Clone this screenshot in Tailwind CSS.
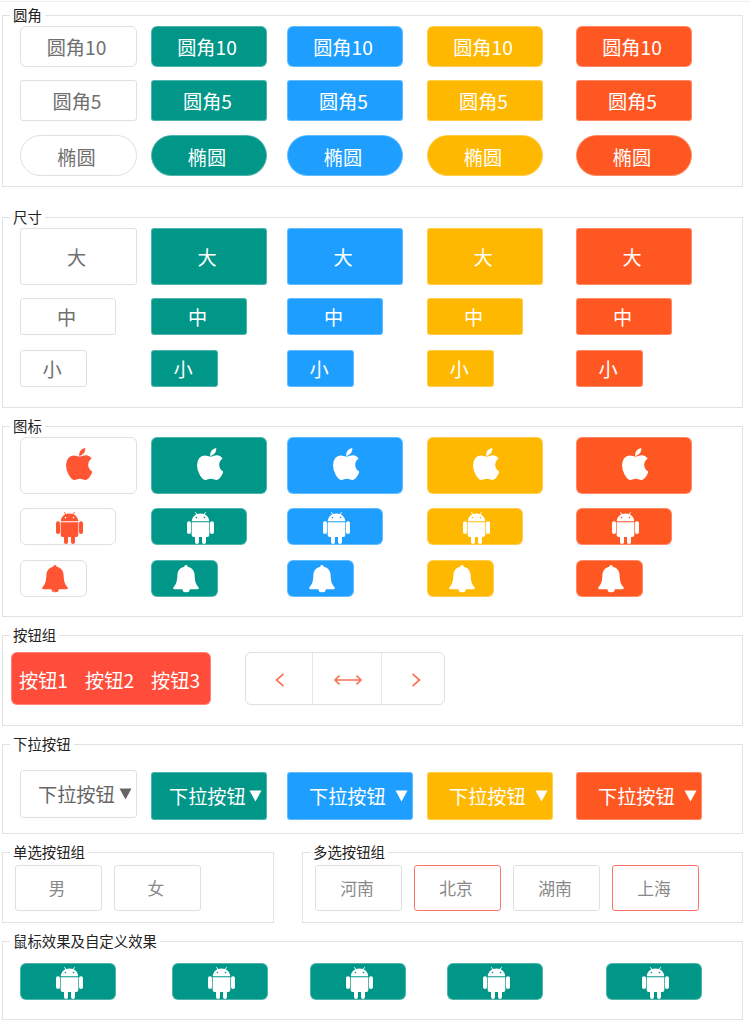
<!DOCTYPE html>
<html lang="zh-CN">
<head>
<meta charset="utf-8">
<title>按钮</title>
<script src="https://cdn.jsdelivr.net/npm/@tailwindcss/browser@4"></script>
</head>
<body class="h-[1024px] overflow-hidden bg-white font-['Noto_Sans_CJK_SC',sans-serif] text-[19.2px] text-[#707070]">
<svg class="hidden">
  <symbol id="apple" viewBox="192 0 1394 1664" preserveAspectRatio="none"><path d="M1585 1215q-39 125-123 250-129 196-257 196-49 0-140-32-86-32-151-32-61 0-142 33-81 34-132 34-152 0-301-259-147-261-147-503 0-228 113-374 113-144 284-144 72 0 177 30 104 30 138 30 45 0 143-34 102-34 173-34 119 0 213 65 52 36 104 100-79 67-114 118-65 94-65 207 0 124 69 223t158 126zm-376-1173q0 61-29 136-30 75-93 138-54 54-108 72-37 11-104 17 3-149 78-257 74-107 250-148 1 3 2.500 11t2.500 11q0 4 .5 10t.5 10z"/></symbol>
  <symbol id="android" viewBox="0 0 81 96"><path fill-rule="evenodd" d="M14 28C15 18 20 11 28 7L23.500 0.500L25.500 0L30.500 6C37 3.500 44 3.500 50.500 6L55.500 0L57.500 0.500L53 7C61 11 66 18 67 28ZM28.500 14a2.300 2.300 0 1 0 .01 0ZM52.500 14a2.300 2.300 0 1 0 .01 0Z"/><path d="M14 30.500H67V69Q67 75 61 75H57V90a6 6 0 0 1-12 0V75H36V90a6 6 0 0 1-12 0V75H20Q14 75 14 69Z"/><rect x="0" y="28" width="12" height="38" rx="5.700"/><rect x="69" y="28" width="12" height="38" rx="5.700"/></symbol>
  <symbol id="bell" viewBox="0 0 77 82"><path d="M38.500 0C42 0 43.500 2.500 43.500 5C56 8 63 16 64 28C65 44 66 56 76 66C78 69 76 72 73 72H50C50 78 45 82 38.500 82C32 82 28 78 28 72H4C1 72 -1 69 1 66C11 56 12 44 13 28C14 16 21 8 33.500 5C33.500 2.500 35 0 38.500 0Z"/><path d="M31 74.500Q32 79 38 79.500" fill="none" stroke="#fff" stroke-opacity=".55" stroke-width="2"/></symbol>
</svg>
<div class="mt-px h-px bg-[#eeeeee]"></div>
<main class="ml-[2px] mt-[13px] flex w-[741px] flex-col gap-[18px] [&_h2]:-mt-[10px] [&_h2]:ml-[7px] [&_h2]:h-[18px] [&_h2]:w-fit [&_h2]:bg-white [&_h2]:px-[3px] [&_h2]:text-[14.4px] [&_h2]:leading-[18px] [&_h2]:text-[#222] [&_section]:border [&_section]:border-[#e2e2e2]">

  <section class="mb-[12px] h-[172px]">
    <h2>圆角</h2>
    <div class="ml-[17px] mt-[2px] grid grid-cols-[131px_136px_140px_149px_116px] text-white [&>*]:flex [&>*]:h-[41px] [&>*]:w-[116px] [&>*]:justify-center [&>*]:rounded-[6px] [&>*]:border [&>*]:border-white/30 [&>*]:pr-[4px] [&>*]:leading-[40px]">
      <button class="w-[117px]! border-[#e0e0e0]! text-[#707070]">圆角10</button>
      <button class="bg-[#009688]">圆角10</button>
      <button class="bg-[#1e9fff]">圆角10</button>
      <button class="bg-[#ffb800]">圆角10</button>
      <button class="bg-[#ff5722]">圆角10</button>
    </div>
    <div class="ml-[17px] mt-[13px] grid grid-cols-[131px_136px_140px_149px_116px] text-white [&>*]:flex [&>*]:h-[41px] [&>*]:w-[116px] [&>*]:justify-center [&>*]:rounded-[3px] [&>*]:border [&>*]:border-white/30 [&>*]:pr-[3px] [&>*]:leading-[41px]">
      <button class="w-[117px]! border-[#e0e0e0]! text-[#707070]">圆角5</button>
      <button class="bg-[#009688]">圆角5</button>
      <button class="bg-[#1e9fff]">圆角5</button>
      <button class="bg-[#ffb800]">圆角5</button>
      <button class="bg-[#ff5722]">圆角5</button>
    </div>
    <div class="ml-[17px] mt-[14px] grid grid-cols-[131px_136px_140px_149px_116px] text-white [&>*]:flex [&>*]:h-[41px] [&>*]:w-[116px] [&>*]:justify-center [&>*]:rounded-full [&>*]:border [&>*]:border-white/30 [&>*]:pr-[4px] [&>*]:pt-px [&>*]:leading-[40px]">
      <button class="w-[117px]! border-[#e0e0e0]! text-[#707070]">椭圆</button>
      <button class="bg-[#009688]">椭圆</button>
      <button class="bg-[#1e9fff]">椭圆</button>
      <button class="bg-[#ffb800]">椭圆</button>
      <button class="bg-[#ff5722]">椭圆</button>
    </div>
  </section>

  <section class="h-[191px]">
    <h2>尺寸</h2>
    <div class="ml-[17px] mt-[2px] grid grid-cols-[131px_136px_140px_149px_116px] text-white [&>*]:flex [&>*]:h-[57px] [&>*]:w-[116px] [&>*]:justify-center [&>*]:rounded-[3px] [&>*]:border [&>*]:border-white/30 [&>*]:pr-[4px] [&>*]:leading-[56px]">
      <button class="w-[117px]! border-[#e0e0e0]! text-[#707070]">大</button>
      <button class="bg-[#009688]">大</button>
      <button class="bg-[#1e9fff]">大</button>
      <button class="bg-[#ffb800]">大</button>
      <button class="bg-[#ff5722]">大</button>
    </div>
    <div class="ml-[17px] mt-[13px] grid grid-cols-[131px_136px_140px_149px_116px] text-white [&>*]:flex [&>*]:h-[37px] [&>*]:w-[96px] [&>*]:justify-center [&>*]:rounded-[3px] [&>*]:border [&>*]:border-white/30 [&>*]:pr-[3px] [&>*]:leading-[36px]">
      <button class="border-[#e0e0e0]! text-[#707070]">中</button>
      <button class="bg-[#009688]">中</button>
      <button class="bg-[#1e9fff]">中</button>
      <button class="bg-[#ffb800]">中</button>
      <button class="bg-[#ff5722]">中</button>
    </div>
    <div class="ml-[17px] mt-[15px] grid grid-cols-[131px_136px_140px_149px_116px] text-white [&>*]:flex [&>*]:h-[37px] [&>*]:w-[67px] [&>*]:justify-center [&>*]:rounded-[3px] [&>*]:border [&>*]:border-white/30 [&>*]:pr-[3px] [&>*]:leading-[36px]">
      <button class="border-[#e0e0e0]! text-[#707070]">小</button>
      <button class="bg-[#009688]">小</button>
      <button class="bg-[#1e9fff]">小</button>
      <button class="bg-[#ffb800]">小</button>
      <button class="bg-[#ff5722]">小</button>
    </div>
  </section>

  <section class="h-[191px]">
    <h2>图标</h2>
    <div class="ml-[17px] mt-[2px] grid grid-cols-[131px_136px_140px_149px_116px] text-white [&>*]:h-[57px] [&>*]:w-[116px] [&>*]:rounded-[6px] [&>*]:border [&>*]:border-white/30 [&>*]:pl-[44.500px] [&_svg]:-mt-[3px] [&_svg]:h-[32px] [&_svg]:w-[26.500px] [&_svg]:fill-current">
      <button class="w-[117px]! border-[#e0e0e0]! text-[#ff5533]"><svg><use href="#apple"/></svg></button>
      <button class="bg-[#009688]"><svg><use href="#apple"/></svg></button>
      <button class="bg-[#1e9fff]"><svg><use href="#apple"/></svg></button>
      <button class="bg-[#ffb800]"><svg><use href="#apple"/></svg></button>
      <button class="bg-[#ff5722]"><svg><use href="#apple"/></svg></button>
    </div>
    <div class="ml-[17px] mt-[14px] grid grid-cols-[131px_136px_140px_149px_116px] text-white [&>*]:flex [&>*]:h-[37px] [&>*]:w-[96px] [&>*]:rounded-[6px] [&>*]:border [&>*]:border-white/30 [&>*]:pl-[35px] [&>*]:pt-[3px] [&_svg]:h-[32px] [&_svg]:w-[27px] [&_svg]:fill-current">
      <button class="border-[#e0e0e0]! text-[#ff5533]"><svg><use href="#android"/></svg></button>
      <button class="bg-[#009688]"><svg><use href="#android"/></svg></button>
      <button class="bg-[#1e9fff]"><svg><use href="#android"/></svg></button>
      <button class="bg-[#ffb800]"><svg><use href="#android"/></svg></button>
      <button class="bg-[#ff5722]"><svg><use href="#android"/></svg></button>
    </div>
    <div class="ml-[17px] mt-[15px] grid grid-cols-[131px_136px_140px_149px_116px] text-white [&>*]:flex [&>*]:h-[37px] [&>*]:w-[67px] [&>*]:rounded-[6px] [&>*]:border [&>*]:border-white/30 [&>*]:pl-[20.500px] [&>*]:pt-[4px] [&_svg]:h-[27.500px] [&_svg]:w-[26px] [&_svg]:fill-current">
      <button class="border-[#e0e0e0]! text-[#ff5533]"><svg><use href="#bell"/></svg></button>
      <button class="bg-[#009688]"><svg><use href="#bell"/></svg></button>
      <button class="bg-[#1e9fff]"><svg><use href="#bell"/></svg></button>
      <button class="bg-[#ffb800]"><svg><use href="#bell"/></svg></button>
      <button class="bg-[#ff5722]"><svg><use href="#bell"/></svg></button>
    </div>
  </section>

  <section class="h-[91px]">
    <h2>按钮组</h2>
    <div class="ml-[8px] mt-[8px] flex gap-[34px]">
      <div class="flex h-[53px] w-[200px] gap-[17px] rounded-[6px] border border-white/30 bg-[#ff4c3b] pl-[7px] leading-[54px] text-white">
        <button>按钮1</button><button>按钮2</button><button>按钮3</button>
      </div>
      <div class="flex h-[53px] w-[200px] rounded-[6px] border border-[#e0e0e0] [&_path]:fill-none [&_path]:stroke-[#ff7058] [&_path]:stroke-[1.700]">
        <button class="flex w-[66px] items-center pl-[28px] pt-[2px]"><svg class="h-[14px] w-[12px]"><path d="M9.500 .8L2.500 7L9.500 13.200"/></svg></button>
        <button class="flex w-[70px] items-center border-x border-[#e6e6e6] pl-[20px] pt-[2px]"><svg class="h-[12px] w-[30px]"><path d="M2 6H28M6.500 1.500L2 6L6.500 10.500M23.500 1.500L28 6L23.500 10.500"/></svg></button>
        <button class="flex w-[62px] items-center pl-[28px] pt-[2px]"><svg class="h-[14px] w-[12px]"><path d="M2.500 .8L9.500 7L2.500 13.200"/></svg></button>
      </div>
    </div>
  </section>

  <section class="h-[90px]">
    <h2>下拉按钮</h2>
    <div class="ml-[17px] mt-[17px] grid grid-cols-[131px_136px_140px_149px_126px] text-white [&>*]:mt-[2px] [&>*]:flex [&>*]:h-[48px] [&>*]:w-[126px] [&>*]:items-center [&>*]:justify-between [&>*]:rounded-[3px] [&>*]:border [&>*]:border-white/30 [&>*]:pl-[21px] [&>*]:pr-[4px] [&_svg]:h-[12px] [&_svg]:w-[13px] [&_svg]:fill-current">
      <button class="mt-0! w-[117px]! border-[#e0e0e0]! pl-[17px]! text-[#666]">下拉按钮<svg><path d="M.5 .5H12.500L6.500 11.500Z"/></svg></button>
      <button class="w-[116px]! bg-[#009688] pl-[17px]!">下拉按钮<svg><path d="M.5 .5H12.500L6.500 11.500Z"/></svg></button>
      <button class="bg-[#1e9fff]">下拉按钮<svg><path d="M.5 .5H12.500L6.500 11.500Z"/></svg></button>
      <button class="bg-[#ffb800]">下拉按钮<svg><path d="M.5 .5H12.500L6.500 11.500Z"/></svg></button>
      <button class="bg-[#ff5722]">下拉按钮<svg><path d="M.5 .5H12.500L6.500 11.500Z"/></svg></button>
    </div>
  </section>

  <div class="flex justify-between text-[16.800px] text-[#888]">
    <section class="h-[71px] w-[272px]">
      <h2>单选按钮组</h2>
      <div class="ml-[12px] mt-[4px] flex gap-[12px] [&>*]:h-[46px] [&>*]:w-[87px] [&>*]:rounded-[3px] [&>*]:border [&>*]:border-[#e0e0e0] [&>*]:pr-[3px] [&>*]:leading-[44px]">
        <button>男</button><button>女</button>
      </div>
    </section>
    <section class="h-[71px] w-[441px]">
      <h2>多选按钮组</h2>
      <div class="ml-[12px] mt-[4px] flex gap-[12px] [&>*]:h-[46px] [&>*]:w-[87px] [&>*]:rounded-[3px] [&>*]:border [&>*]:border-[#e0e0e0] [&>*]:pr-[3px] [&>*]:leading-[44px]">
        <button>河南</button><button class="border-[#ff7468]!">北京</button><button>湖南</button><button class="border-[#ff7468]!">上海</button>
      </div>
    </section>
  </div>

  <section class="h-[79px]">
    <h2>鼠标效果及自定义效果</h2>
    <div class="ml-[17px] mt-[13px] grid grid-cols-[152px_138px_137px_159px_96px] text-white [&>*]:flex [&>*]:h-[37px] [&>*]:w-[96px] [&>*]:rounded-[6px] [&>*]:border [&>*]:border-white/30 [&>*]:bg-[#009688] [&>*]:pl-[35px] [&>*]:pt-[3px] [&_svg]:h-[32px] [&_svg]:w-[27px] [&_svg]:fill-current">
      <button><svg><use href="#android"/></svg></button>
      <button><svg><use href="#android"/></svg></button>
      <button><svg><use href="#android"/></svg></button>
      <button><svg><use href="#android"/></svg></button>
      <button><svg><use href="#android"/></svg></button>
    </div>
  </section>
</main>
</body>
</html>
